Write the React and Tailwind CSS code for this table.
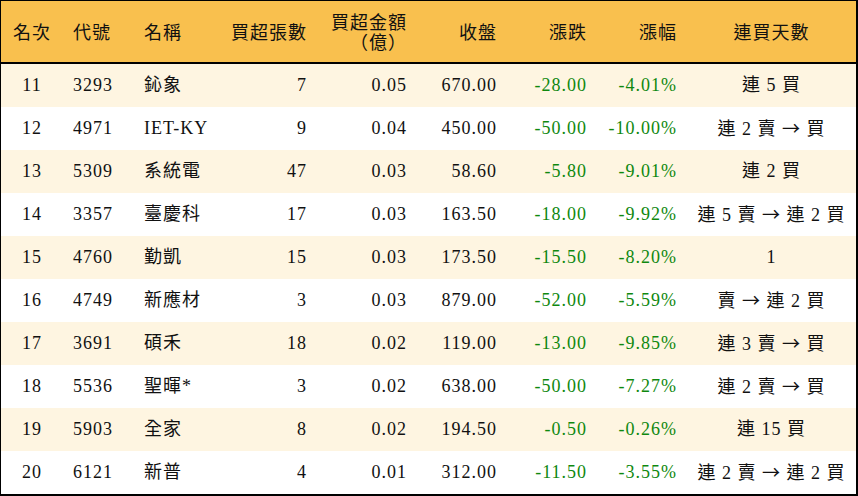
const rows = [
  { rank: 11, code: "3293", name: "鈊象", lots: "7", amt: "0.05", close: "670.00", chg: "-28.00", pct: "-4.01%", streak: "連 5 買" },
  { rank: 12, code: "4971", name: "IET-KY", lots: "9", amt: "0.04", close: "450.00", chg: "-50.00", pct: "-10.00%", streak: "連 2 賣 → 買" },
  { rank: 13, code: "5309", name: "系統電", lots: "47", amt: "0.03", close: "58.60", chg: "-5.80", pct: "-9.01%", streak: "連 2 買" },
  { rank: 14, code: "3357", name: "臺慶科", lots: "17", amt: "0.03", close: "163.50", chg: "-18.00", pct: "-9.92%", streak: "連 5 賣 → 連 2 買" },
  { rank: 15, code: "4760", name: "勤凱", lots: "15", amt: "0.03", close: "173.50", chg: "-15.50", pct: "-8.20%", streak: "1" },
  { rank: 16, code: "4749", name: "新應材", lots: "3", amt: "0.03", close: "879.00", chg: "-52.00", pct: "-5.59%", streak: "賣 → 連 2 買" },
  { rank: 17, code: "3691", name: "碩禾", lots: "18", amt: "0.02", close: "119.00", chg: "-13.00", pct: "-9.85%", streak: "連 3 賣 → 買" },
  { rank: 18, code: "5536", name: "聖暉*", lots: "3", amt: "0.02", close: "638.00", chg: "-50.00", pct: "-7.27%", streak: "連 2 賣 → 買" },
  { rank: 19, code: "5903", name: "全家", lots: "8", amt: "0.02", close: "194.50", chg: "-0.50", pct: "-0.26%", streak: "連 15 買" },
  { rank: 20, code: "6121", name: "新普", lots: "4", amt: "0.01", close: "312.00", chg: "-11.50", pct: "-3.55%", streak: "連 2 賣 → 連 2 買" },
];

const cols = "grid grid-cols-[62px_71px_83px_100px_100px_90px_90px_90px_169px]";

// the arrow in the streak column is the wide CJK one
function Streak({ text }) {
  const parts = text.split("→");
  return (
    <>
      {parts.map((p, i) => (
        <span key={i}>
          {i > 0 && <span className="font-['Noto_Sans_CJK_TC']">→</span>}
          {p}
        </span>
      ))}
    </>
  );
}

export default function App() {
  return (
    <div
      className="w-[858px] h-[496px] overflow-hidden bg-white text-[#111] text-[18px] tracking-[1px]"
      style={{ fontFamily: '"Liberation Serif", "Noto Sans CJK TC", serif' }}
    >
      <div className="h-full border-t border-l border-r-2 border-b-2 border-black">
        {/* header */}
        <div className={`${cols} h-[63px] bg-[#f9c04e] border-b-2 border-black items-center leading-[20px] pt-[3px]`}>
          <div className="text-center">名次</div>
          <div className="pl-[10px]">代號</div>
          <div className="pl-[10px]">名稱</div>
          <div className="text-right pr-[10px]">買超張數</div>
          <div className="text-right pr-[10px]">
            買超金額
            <br />
            （億）
          </div>
          <div className="text-right pr-[10px]">收盤</div>
          <div className="text-right pr-[10px]">漲跌</div>
          <div className="text-right pr-[10px]">漲幅</div>
          <div className="text-center">連買天數</div>
        </div>

        {rows.map((r, i) => (
          <div
            key={r.rank}
            className={`${cols} h-[43px] items-center ${i % 2 === 0 ? "bg-[#fef5e1]" : "bg-white"}`}
          >
            <div className="text-center">{r.rank}</div>
            <div className="pl-[10px]">{r.code}</div>
            <div className="pl-[10px] whitespace-nowrap">{r.name}</div>
            <div className="text-right pr-[10px]">{r.lots}</div>
            <div className="text-right pr-[10px]">{r.amt}</div>
            <div className="text-right pr-[10px]">{r.close}</div>
            <div className="text-right pr-[10px] text-[#0f880f]">{r.chg}</div>
            <div className="text-right pr-[10px] text-[#0f880f]">{r.pct}</div>
            <div className="text-center whitespace-nowrap">
              <Streak text={r.streak} />
            </div>
          </div>
        ))}
      </div>
    </div>
  );
}
